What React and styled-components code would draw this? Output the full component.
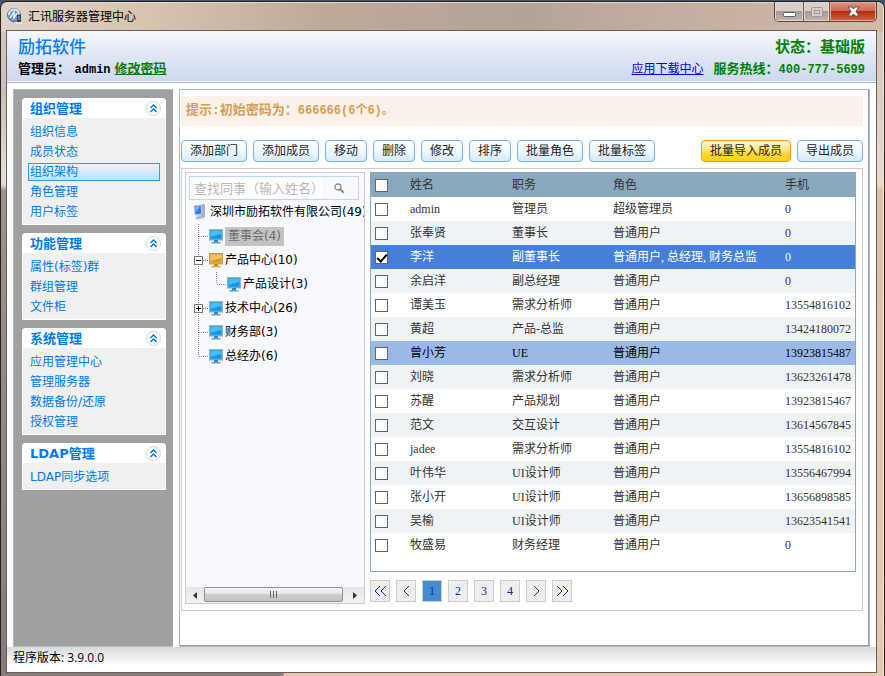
import { useState } from 'react'
import styled, { createGlobalStyle, css } from 'styled-components'

const sans = '"DejaVu Sans", "Noto Sans CJK SC", sans-serif'
const serif = '"Liberation Serif", "Noto Sans CJK SC", serif'
const mono = '"Liberation Mono", "Noto Sans CJK SC", monospace'

const GlobalStyle = createGlobalStyle`
  * {
    box-sizing: border-box;
  }
  body {
    margin: 0;
    font-family: ${sans};
    font-size: 12px;
    line-height: 18px;
    color: #333;
    background: #44566b;
  }
  button,
  input {
    font: inherit;
    margin: 0;
  }
  ul {
    list-style: none;
    margin: 0;
    padding: 0;
  }
`

const Desktop = styled.div`
  min-height: 100vh;
  padding: 1px 0 0;
  display: flex;
`
const Window = styled.div`
  flex: 1;
  min-width: 0;
  display: flex;
  flex-direction: column;
  padding: 0 7px 3px 5px;
  border: 1px solid #26221f;
  border-width: 1px 1px 0 1px;
  border-radius: 7px 7px 0 0;
  box-shadow: inset 0 1px 0 #e6dbd3, inset -1px 0 0 #f4e4d8;
  background: linear-gradient(to right, #e0d2c6 0, #d9c3b1 16%, #bda898 38%, #b5a39a 60%, #c3ada0 75%, #d3bba9 100%)
      top / 100% 30px no-repeat,
    linear-gradient(#d9cbbe 0, #c9bfb7 14%, #e6e1dd 27%, #9c938e 28%, #857b7b 100%) left / 32% 100% no-repeat,
    linear-gradient(#d3c0b1 0, #e9dccf 27%, #dfbfa5 28%, #e8c8b0 100%);
`
const TitleBar = styled.div`
  display: flex;
  height: 28px;
  padding-left: 1px;
`
const Title = styled.h1`
  flex: 1;
  display: flex;
  align-items: center;
  gap: 5px;
  margin: 0;
  font-family: 'Noto Sans CJK SC', sans-serif;
  font-size: 12px;
  font-weight: normal;
  color: #000;
`
const WindowButtons = styled.div`
  display: flex;
  height: 20px;
  border: 1px solid #54453f;
  border-top: 0;
  border-radius: 0 0 5px 5px;
  overflow: hidden;
`
const WindowButton = styled.button`
  display: flex;
  align-items: center;
  justify-content: center;
  width: ${(p) => p.$width}px;
  padding: 0;
  border: 0;
  border-right: 1px solid #6a5b54;
  box-shadow: inset 0 0 0 1px #e0d8d2;
  background: linear-gradient(#d8cfc9 45%, #a89a93 50%, #c3b5ac);
  &:last-child {
    border-right: 0;
  }
  ${(p) =>
    p.$close &&
    css`
      box-shadow: inset 0 0 0 1px #e9ab9c;
      background: linear-gradient(#dc9484 0, #cd6b56 45%, #b62e12 50%, #d2623f);
    `}
`
const Client = styled.div`
  flex: 1;
  display: flex;
  flex-direction: column;
  border: 1px solid #6a5d56;
  background: #fff;
`
const Header = styled.header`
  display: flex;
  justify-content: space-between;
  padding: 6px 11px 0;
  height: 52px;
  border-bottom: 1px solid #a3b7d3;
  box-shadow: inset 0 -1px 0 #f2f6fc;
  background: linear-gradient(#f7f9fc, #dee6f5 50%, #cdd9ef);
`
const HeaderSide = styled.div`
  display: flex;
  flex-direction: column;
  align-items: ${(p) => (p.$end ? 'flex-end' : 'flex-start')};
`
const HeaderRow = styled.div`
  display: flex;
  align-items: center;
  gap: ${(p) => (p.$wide ? 10 : 4)}px;
  height: 24px;
  font-size: 13px;
  font-weight: bold;
  color: ${(p) => p.$color || '#000'};
`
const Brand = styled.div`
  font-size: 17px;
  line-height: 20px;
  font-weight: 500;
  color: #0080ff;
`
const Status = styled.div`
  font-size: 15px;
  line-height: 20px;
  font-weight: bold;
  color: #008000;
`
const Latin = styled.span`
  font-family: ${mono};
  font-size: 12px;
`
const HeaderLink = styled.a`
  color: ${(p) => p.$color};
  font-size: ${(p) => (p.$plain ? 12 : 13)}px;
  font-weight: ${(p) => (p.$plain ? 'normal' : 'bold')};
`
const Body = styled.div`
  flex: 1;
  display: flex;
  gap: 6px;
  padding: 6px 6px 0;
`
const Sidebar = styled.nav`
  flex: none;
  width: 160px;
  display: flex;
  flex-direction: column;
  gap: 8px;
  padding: 8px 7px 8px 8px;
  border: 1px solid #a5bddb;
  border-right: 0;
  background: #a0a0a0;
`
const Group = styled.section`
  border: 1px solid #fff;
  border-radius: 3px 3px 0 0;
  background: #f0f0f0;
`
const GroupTitle = styled.h2`
  display: flex;
  align-items: center;
  justify-content: space-between;
  height: 19px;
  margin: 0;
  padding: 0 4px 0 7px;
  font-size: 13px;
  font-weight: bold;
  color: #0078f0;
  background: #fff;
`
const FoldButton = styled.button`
  display: flex;
  align-items: center;
  justify-content: center;
  width: 15px;
  height: 15px;
  padding: 0;
  border: 1px solid #d4d4d4;
  border-radius: 50%;
  background: #fff;
`
const GroupList = styled.ul`
  padding: 4px 5px 2px;
`
const GroupItem = styled.li`
  height: 20px;
  padding-top: 1px;
`
const GroupLink = styled.a`
  display: block;
  height: 18px;
  padding-left: 1px;
  line-height: 17px;
  border: 1px solid transparent;
  color: #0078f0;
  text-decoration: none;
  ${(p) =>
    p.$active &&
    css`
      border-color: #3399ff;
      background: linear-gradient(#eaf4ff, #c2dfff);
    `}
`
const Main = styled.main`
  flex: 1;
  min-width: 0;
  padding: 6px 6px 6px 1px;
  border: 1px solid #a5bddb;
  box-shadow: inset -1px -1px 0 #9a9ea3;
`
const Tip = styled.p`
  display: flex;
  align-items: center;
  margin: 0;
  height: 30px;
  padding: 0 5px;
  font-family: ${mono};
  font-size: 13px;
  font-weight: bold;
  color: #d39e55;
  background: #faf1ea;
`
const Toolbar = styled.div`
  display: flex;
  gap: 6px;
  margin: 14px 0 6px;
`
const Spacer = styled.div`
  flex: 1;
`
const ToolButton = styled.button`
  height: 22px;
  padding: 0 8px;
  line-height: 20px;
  color: #222;
  white-space: nowrap;
  border: 1px solid #7eb1e0;
  border-radius: 4px;
  background: linear-gradient(#fff, #eef7ff 50%, #d4eaff);
  ${(p) =>
    p.$primary &&
    css`
      border-color: #f79c2f;
      background: linear-gradient(#fff6cc, #ffe680 45%, #ffd633 60%, #ffd11f);
    `}
`
const Content = styled.div`
  display: flex;
  gap: 5px;
  padding: 3px 6px 6px 3px;
  border: 1px solid #ccc;
`
const TreePanel = styled.section`
  flex: none;
  width: 180px;
  display: flex;
  flex-direction: column;
  overflow: hidden;
  border: 1px solid #ccc;
  background: #f7f9fe;
`
const SearchBox = styled.div`
  display: flex;
  align-items: center;
  margin: 3px 5px 0 3px;
  height: 24px;
  padding: 0 13px 0 3px;
  border: 1px solid #c6d5e5;
`
const SearchInput = styled.input`
  flex: 1;
  min-width: 0;
  height: 20px;
  padding: 0 1px;
  border: 0;
  font-size: 13px;
  background: #fff;
  &::placeholder {
    color: #b8b8b8;
  }
`
const IconButton = styled.button`
  display: flex;
  padding: 0;
  margin-left: 12px;
  border: 0;
  background: none;
`
const Tree = styled.ul`
  flex: 1;
  padding-left: 5px;
  font-size: 12px;
  color: #000;
`
const TreeRow = styled.li`
  display: flex;
  align-items: center;
  height: 24px;
  line-height: 19px;
  white-space: nowrap;
  svg {
    flex: none;
  }
`
const TreeRoot = styled(TreeRow)`
  height: 24px;
  gap: 4px;
  padding-left: 2px;
`
const TreeLabel = styled.span`
  margin-left: 2px;
  ${(p) =>
    p.$active &&
    css`
      padding: 0 3px;
      color: #6d6d6d;
      background: #c3c3c3;
    `}
`
const ScrollBar = styled.div`
  display: flex;
  height: 16px;
  background: linear-gradient(#e6e6e6, #f3f3f3);
`
const ScrollArrow = styled.button`
  display: flex;
  align-items: center;
  justify-content: center;
  width: 18px;
  padding: 0;
  border: 0;
  background: none;
`
const ScrollThumb = styled.div`
  display: flex;
  align-items: center;
  justify-content: center;
  width: 139px;
  height: 15px;
  border: 1px solid #919191;
  border-radius: 2px;
  background: linear-gradient(#f5f5f5, #e6e6e6 45%, #cfcfcf 50%, #c2c2c2);
`
const Members = styled.section`
  flex: 1;
  min-width: 0;
`
const TableBox = styled.div`
  padding-bottom: 14px;
  border: 1px solid #8aa9bf;
  background: #fff;
`
const Table = styled.table`
  width: 100%;
  table-layout: fixed;
  border-collapse: collapse;
  font-family: ${serif};
  th,
  td {
    height: 24px;
    padding: 0;
    text-align: left;
    font-weight: normal;
    white-space: nowrap;
  }
  thead {
    background: #8aa9bf;
  }
`
const Row = styled.tr`
  background: ${(p) => (p.$odd ? '#eff3f6' : '#fff')};
  ${(p) =>
    p.$selected &&
    css`
      color: #fff;
      background: #457fd8;
    `}
  ${(p) =>
    p.$hovered &&
    css`
      color: #000;
      background: #9bb9e7;
    `}
`
const Checkbox = styled.input`
  appearance: none;
  display: flex;
  justify-content: center;
  width: 13px;
  height: 13px;
  margin-left: 4px;
  border: 1px solid #666;
  background: #fff;
  &:checked::after {
    content: '';
    width: 4px;
    height: 8px;
    border: solid #000;
    border-width: 0 2px 2px 0;
    transform: rotate(42deg);
  }
`
const Pager = styled.nav`
  display: flex;
  gap: 6px;
  padding: 8px 0 2px;
`
const PageButton = styled.button`
  display: flex;
  align-items: center;
  justify-content: center;
  width: 20px;
  height: 22px;
  padding: 0;
  font-family: ${serif};
  color: #003399;
  border: 1px solid #ccc;
  background: ${(p) => (p.$current ? '#448bd3' : '#eee')};
`
const StatusBar = styled.footer`
  height: 25px;
  padding: 2px 6px;
  font-family: 'Open Sans', 'Noto Sans CJK SC', sans-serif;
  color: #000;
  background: linear-gradient(#dadada, #fff 75%);
`

const groups = [
  { title: '组织管理', items: ['组织信息', '成员状态', '组织架构', '角色管理', '用户标签'] },
  { title: '功能管理', items: ['属性(标签)群', '群组管理', '文件柜'] },
  { title: '系统管理', items: ['应用管理中心', '管理服务器', '数据备份/还原', '授权管理'] },
  { title: 'LDAP管理', items: ['LDAP同步选项'] },
]

const tools = ['添加部门', '添加成员', '移动', '删除', '修改', '排序', '批量角色', '批量标签']

const departments = [
  { name: '董事会(4)', guides: ['tee'] },
  { name: '产品中心(10)', guides: ['minus'], gold: true },
  { name: '产品设计(3)', guides: ['line', 'elbow'] },
  { name: '技术中心(26)', guides: ['plus'] },
  { name: '财务部(3)', guides: ['tee'] },
  { name: '总经办(6)', guides: ['elbow'] },
]

const members = [
  ['admin', '管理员', '超级管理员', '0'],
  ['张奉贤', '董事长', '普通用户', '0'],
  ['李洋', '副董事长', '普通用户, 总经理, 财务总监', '0'],
  ['余启洋', '副总经理', '普通用户', '0'],
  ['谭美玉', '需求分析师', '普通用户', '13554816102'],
  ['黄超', '产品-总监', '普通用户', '13424180072'],
  ['曾小芳', 'UE', '普通用户', '13923815487'],
  ['刘晓', '需求分析师', '普通用户', '13623261478'],
  ['苏醒', '产品规划', '普通用户', '13923815467'],
  ['范文', '交互设计', '普通用户', '13614567845'],
  ['jadee', '需求分析师', '普通用户', '13554816102'],
  ['叶伟华', 'UI设计师', '普通用户', '13556467994'],
  ['张小开', 'UI设计师', '普通用户', '13656898585'],
  ['吴榆', 'UI设计师', '普通用户', '13623541541'],
  ['牧盛易', '财务经理', '普通用户', '0'],
]

const pages = ['first', 'prev', '1', '2', '3', '4', 'next', 'last']

const pageArrows = {
  first: 'M6 1 1 6l5 5M12 1 7 6l5 5',
  prev: 'M9 1 4 6l5 5',
  next: 'M4 1l5 5-5 5',
  last: 'M1 1l5 5-5 5M7 1l5 5-5 5',
}

const AppIcon = () => (
  <svg width="16" height="16" viewBox="0 0 16 16">
    <circle cx="7" cy="7" r="6.5" fill="#6f96bf" stroke="#4d719b" />
    <path d="M2 7a5 5 0 0 1 10-1" fill="none" stroke="#dceafa" strokeWidth="2" />
    <path d="M3 10l4-6v6l3-5" fill="none" stroke="#fff" strokeWidth="1.3" />
    <path d="M4 13l3-1v3z" fill="#5c87b5" />
    <rect x="10" y="7" width="4" height="7" fill="#34414f" />
    <path d="M11 9h2M11 11h2" stroke="#8ec1e8" />
    <path d="M9 15h6" stroke="#e9f3fa" />
  </svg>
)

const FoldIcon = () => (
  <svg width="9" height="9" viewBox="0 0 9 9" fill="none" stroke="#0078f0" strokeWidth="1.5">
    <path d="M1.5 4l3-3 3 3M1.5 8l3-3 3 3" />
  </svg>
)

const Guide = ({ type }) => {
  const box = type === 'minus' || type === 'plus'
  return (
    <svg width="18" height="24" viewBox="0 0 18 24" fill="none" shapeRendering="crispEdges">
      <path d={type === 'elbow' ? 'M7.5 0v12' : 'M7.5 0v24'} stroke="#888" strokeDasharray="1 1" />
      {type !== 'line' && <path d="M8 12.5h10" stroke="#888" strokeDasharray="1 1" />}
      {box && <rect x="3.5" y="8.5" width="8" height="8" fill="#fff" stroke="#777" />}
      {box && <path d="M5 12.5h5" stroke="#000" />}
      {type === 'plus' && <path d="M7.5 10v5" stroke="#000" />}
    </svg>
  )
}

const Monitor = ({ gold }) => (
  <svg width="14" height="15" viewBox="0 0 14 15">
    <rect x="0.5" y="0.5" width="13" height="10.5" fill={gold ? '#e9b24a' : '#48a6dc'} stroke={gold ? '#c99a4c' : '#83b4d2'} />
    <rect x="2" y="2" width="10" height="7.5" fill={gold ? '#d99a26' : '#1295e0'} />
    <path d="M2 2h10v3L2 8z" fill={gold ? '#f0c366' : '#45bdf7'} />
    <rect x="5" y="11" width="4" height="2" fill={gold ? '#c28c2f' : '#3389bd'} />
    <rect x="2.5" y="13" width="9" height="1.5" fill={gold ? '#dba84c' : '#53a9d8'} />
  </svg>
)

const ServerIcon = () => (
  <svg width="13" height="16" viewBox="0 0 13 16">
    <path d="M7 1l4-1 1 1v12l-4 2z" fill="#a9adc8" />
    <path d="M1 2l7-1 1 9-7 1z" fill="#2f7be0" stroke="#b9cdf2" />
    <path d="M2 3l5-1-4 6z" fill="#7db8f8" />
    <path d="M4 11l4-1v2l2 2-5 2-3-2 2-1z" fill="#c6cae0" />
    <path d="M3 14l5-1" stroke="#9196b5" />
  </svg>
)

const SearchIcon = () => (
  <svg width="11" height="11" viewBox="0 0 11 11" fill="none" stroke="#888">
    <circle cx="4" cy="4" r="3" strokeWidth="1.3" />
    <path d="M6.3 6.3l3.4 3.4" strokeWidth="2" />
  </svg>
)

const TopBar = () => (
  <TitleBar>
    <Title>
      <AppIcon />
      汇讯服务器管理中心
    </Title>
    <WindowButtons>
      <WindowButton $width={29} aria-label="最小化">
        <svg width="13" height="13" viewBox="0 0 13 13">
          <rect x="0.5" y="7.5" width="12" height="4" rx="1" fill="#fff" stroke="#5c5c66" />
        </svg>
      </WindowButton>
      <WindowButton $width={26} aria-label="最大化">
        <svg width="12" height="10" viewBox="0 0 12 10" fill="none" stroke="#a09893">
          <rect x="0.5" y="0.5" width="11" height="9" rx="1" fill="#d5ccc6" />
          <rect x="3.5" y="3.5" width="5" height="3" />
        </svg>
      </WindowButton>
      <WindowButton $width={46} $close aria-label="关闭">
        <svg width="13" height="11" viewBox="0 0 13 11">
          <path d="M1 1h4l1.5 2L8 1h4L9 5.5 12 10H8L6.500 8 5 10H1l3-4.500z" fill="#fff" stroke="#5a4a54" />
        </svg>
      </WindowButton>
    </WindowButtons>
  </TitleBar>
)

const SideGroup = ({ title, items, active, onSelect }) => (
  <Group>
    <GroupTitle>
      {title}
      <FoldButton aria-label={title}>
        <FoldIcon />
      </FoldButton>
    </GroupTitle>
    <GroupList>
      {items.map((item) => (
        <GroupItem key={item}>
          <GroupLink href="#" $active={item === active} onClick={() => onSelect(item)}>
            {item}
          </GroupLink>
        </GroupItem>
      ))}
    </GroupList>
  </Group>
)

const DepartmentTree = () => (
  <TreePanel>
    <SearchBox>
      <SearchInput placeholder="查找同事（输入姓名）" aria-label="查找同事" />
      <IconButton aria-label="查找">
        <SearchIcon />
      </IconButton>
    </SearchBox>
    <Tree>
      <TreeRoot>
        <ServerIcon />
        <span>深圳市励拓软件有限公司(49)</span>
      </TreeRoot>
      {departments.map((d, i) => (
        <TreeRow key={d.name}>
          {d.guides.map((g) => (
            <Guide key={g} type={g} />
          ))}
          <Monitor gold={d.gold} />
          <TreeLabel $active={i === 0}>{d.name}</TreeLabel>
        </TreeRow>
      ))}
    </Tree>
    <ScrollBar>
      <ScrollArrow aria-label="向左">
        <svg width="4" height="7" viewBox="0 0 4 7">
          <path d="M4 0v7L0 3.5z" fill="#333" />
        </svg>
      </ScrollArrow>
      <ScrollThumb>
        <svg width="9" height="7" viewBox="0 0 9 7" stroke="#666" shapeRendering="crispEdges">
          <path d="M1.5 0v7M4.5 0v7M7.5 0v7" />
        </svg>
      </ScrollThumb>
      <Spacer />
      <ScrollArrow aria-label="向右">
        <svg width="4" height="7" viewBox="0 0 4 7">
          <path d="M0 0v7l4-3.5z" fill="#333" />
        </svg>
      </ScrollArrow>
    </ScrollBar>
  </TreePanel>
)

const MemberTable = () => {
  const [checked, setChecked] = useState(['李洋'])
  const toggle = (name) =>
    setChecked(checked.includes(name) ? checked.filter((n) => n !== name) : [...checked, name])

  return (
    <TableBox>
      <Table>
        <colgroup>
          <col width="39" />
          <col width="102" />
          <col width="101" />
          <col />
          <col width="70" />
        </colgroup>
        <thead>
          <tr>
            <th>
              <Checkbox type="checkbox" aria-label="全选" />
            </th>
            <th>姓名</th>
            <th>职务</th>
            <th>角色</th>
            <th>手机</th>
          </tr>
        </thead>
        <tbody>
          {members.map(([name, duty, role, phone], i) => (
            <Row key={name} $odd={i % 2 === 1} $selected={checked.includes(name)} $hovered={i === 6}>
              <td>
                <Checkbox
                  type="checkbox"
                  aria-label={name}
                  checked={checked.includes(name)}
                  onChange={() => toggle(name)}
                />
              </td>
              <td>{name}</td>
              <td>{duty}</td>
              <td>{role}</td>
              <td>{phone}</td>
            </Row>
          ))}
        </tbody>
      </Table>
    </TableBox>
  )
}

export default function App() {
  const [active, setActive] = useState('组织架构')
  const [page, setPage] = useState('1')

  return (
    <Desktop>
      <GlobalStyle />
      <Window>
        <TopBar />
        <Client>
          <Header>
            <HeaderSide>
              <Brand>励拓软件</Brand>
              <HeaderRow>
                <span>
                  管理员： <Latin>admin</Latin>
                </span>
                <HeaderLink href="#" $color="#008000">
                  修改密码
                </HeaderLink>
              </HeaderRow>
            </HeaderSide>
            <HeaderSide $end>
              <Status>状态：基础版</Status>
              <HeaderRow $color="#008000" $wide>
                <HeaderLink href="#" $color="#0000ff" $plain>
                  应用下载中心
                </HeaderLink>
                <span>
                  服务热线：<Latin>400-777-5699</Latin>
                </span>
              </HeaderRow>
            </HeaderSide>
          </Header>
          <Body>
            <Sidebar>
              {groups.map((g) => (
                <SideGroup key={g.title} {...g} active={active} onSelect={setActive} />
              ))}
            </Sidebar>
            <Main>
              <Tip>
                提示:初始密码为：<Latin>666666(6个6)。</Latin>
              </Tip>
              <Toolbar>
                {tools.map((t) => (
                  <ToolButton key={t}>{t}</ToolButton>
                ))}
                <Spacer />
                <ToolButton $primary>批量导入成员</ToolButton>
                <ToolButton>导出成员</ToolButton>
              </Toolbar>
              <Content>
                <DepartmentTree />
                <Members>
                  <MemberTable />
                  <Pager>
                    {pages.map((p) => (
                      <PageButton key={p} $current={p === page} onClick={() => setPage(p)} aria-label={p}>
                        {pageArrows[p] ? (
                          <svg width="13" height="12" viewBox="0 0 13 12" fill="none" stroke="#003399">
                            <path d={pageArrows[p]} />
                          </svg>
                        ) : (
                          p
                        )}
                      </PageButton>
                    ))}
                  </Pager>
                </Members>
              </Content>
            </Main>
          </Body>
          <StatusBar>程序版本: 3.9.0.0</StatusBar>
        </Client>
      </Window>
    </Desktop>
  )
}
